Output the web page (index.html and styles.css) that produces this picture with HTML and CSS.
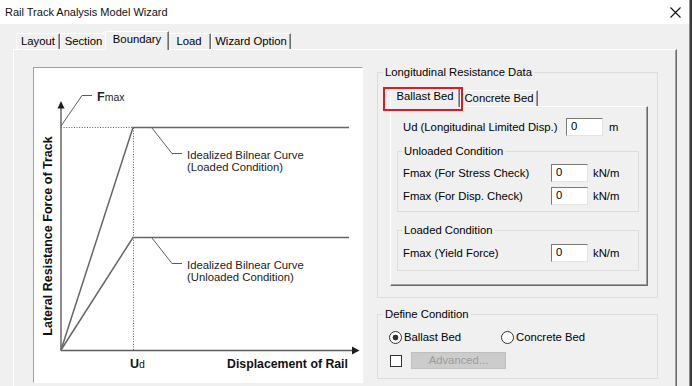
FILE: index.html
```html
<!DOCTYPE html>
<html lang="en">
<head>
    <meta charset="UTF-8">
    <title>Rail Track Analysis Model Wizard</title>
    <link rel="stylesheet" href="styles.css">
</head>
<body>
<div class="window">
    <div class="titlebar">
        <span class="title">Rail Track Analysis Model Wizard</span>
        <svg class="close" width="11" height="11" viewBox="0 0 11 11">
            <path d="M0.5 0.5L10.5 10.5M10.5 0.5L0.5 10.5" stroke="#111" stroke-width="1.1" fill="none"/>
        </svg>
    </div>

    <div class="tabs">
        <div class="tab w-layout">Layout</div>
        <div class="tab w-section">Section</div>
        <div class="tab w-boundary selected">Boundary</div>
        <div class="tab w-load">Load</div>
        <div class="tab w-wizard">Wizard Option</div>
    </div>

    <div class="tabpanel">
        <!-- boundary diagram -->
        <div class="graph">
            <svg width="328" height="314" viewBox="34 68 328 314" font-family="Liberation Sans, Arial, sans-serif">
                <g stroke="#5c5c5c" fill="none">
                    <line x1="61" y1="106" x2="61" y2="350.5" stroke-width="1.4"/>
                    <line x1="61" y1="350.5" x2="354" y2="350.5" stroke-width="1.4"/>
                    <line x1="61" y1="127.5" x2="133" y2="127.5" stroke-dasharray="1 1.6"/>
                    <line x1="133.5" y1="128" x2="133.5" y2="350" stroke-dasharray="1 1.6"/>
                    <polyline points="61,350 133,127.5 349,127.5" stroke="#666" stroke-width="1.5"/>
                    <polyline points="61,350 133,237.5 349,237.5" stroke="#666" stroke-width="1.5"/>
                    <polyline points="61,126 82,95.5 92,95.5"/>
                    <polyline points="152,128 172,153.5 182,153.5"/>
                    <polyline points="152,238 172,263.5 182,263.5"/>
                </g>
                <polygon points="61,101 57.5,108.5 64.5,108.5" fill="#1e1e1e"/>
                <polygon points="359.5,350.5 352,346.5 352,354.5" fill="#1e1e1e"/>

                <text x="97" y="101" fill="#222"><tspan font-size="12.5" font-weight="bold">F</tspan><tspan font-size="10.5">max</tspan></text>
                <text x="187" y="159" font-size="11.3" fill="#222">Idealized Bilnear Curve</text>
                <text x="187" y="171" font-size="11.3" fill="#222">(Loaded Condition)</text>
                <text x="187" y="269" font-size="11.3" fill="#222">Idealized Bilnear Curve</text>
                <text x="187" y="281" font-size="11.3" fill="#222">(Unloaded Condition)</text>
                <text x="130" y="368" fill="#111"><tspan font-size="12.5" font-weight="bold">U</tspan><tspan font-size="10.5">d</tspan></text>
                <text x="227" y="368" font-size="12.3" font-weight="bold" fill="#111">Displacement of Rail</text>
                <text transform="translate(52 236) rotate(-90)" text-anchor="middle" font-size="12.5" font-weight="bold" fill="#111">Lateral Resistance Force of Track</text>
            </svg>
        </div>

        <div class="side">
            <fieldset class="group long">
                <legend>Longitudinal Resistance Data</legend>
                <div class="subtabs">
                    <div class="subtab w-ballast selected">Ballast Bed</div>
                    <div class="subtab w-concrete">Concrete Bed</div>
                </div>
                <div class="subpanel">
                    <div class="row ud">
                        <span class="lbl wide">Ud (Longitudinal Limited Disp.)</span>
                        <div class="input">0</div>
                        <span class="unit">m</span>
                    </div>
                    <fieldset class="group inner unloaded">
                        <legend>Unloaded Condition</legend>
                        <div class="row">
                            <span class="lbl">Fmax (For Stress Check)</span>
                            <div class="input">0</div>
                            <span class="unit">kN/m</span>
                        </div>
                        <div class="row">
                            <span class="lbl">Fmax (For Disp. Check)</span>
                            <div class="input">0</div>
                            <span class="unit">kN/m</span>
                        </div>
                    </fieldset>
                    <fieldset class="group inner loaded">
                        <legend>Loaded Condition</legend>
                        <div class="row">
                            <span class="lbl">Fmax (Yield Force)</span>
                            <div class="input">0</div>
                            <span class="unit">kN/m</span>
                        </div>
                    </fieldset>
                </div>
            </fieldset>

            <fieldset class="group define">
                <legend>Define Condition</legend>
                <div class="radios">
                    <div class="opt first"><span class="radio checked"></span>Ballast Bed</div>
                    <div class="opt"><span class="radio"></span>Concrete Bed</div>
                </div>
                <div class="checkrow">
                    <span class="check"></span>
                    <div class="button disabled">Advanced...</div>
                </div>
            </fieldset>
        </div>
    </div>
</div>
</body>
</html>
```

FILE: styles.css
```css
* {
    box-sizing: border-box;
}

body {
    margin: 0;
    width: 692px;
    height: 386px;
    overflow: hidden;
    background-color: #3c3c3c;
    font-family: "Liberation Sans", Arial, sans-serif;
    font-size: 11.3px;
    color: #000;
}

.window {
    width: 690px;
    height: 386px;
    background-color: #f0f0f0;
    border-right: 1px solid #8c8c8c;
    display: flex;
    flex-direction: column;
}

.titlebar {
    height: 24px;
    flex: none;
    background-color: #fff;
    display: flex;
    align-items: center;
    justify-content: space-between;
    padding: 0 8px 0 5px;
}

.title {
    font-size: 11px;
    color: #111;
}

.close {
    display: block;
}

/* main tab strip */
.tabs {
    display: flex;
    align-items: flex-end;
    height: 18px;
    margin: 7px 0 0 16px;
    flex: none;
}

.tab {
    height: 16px;
    line-height: 14px;
    text-align: center;
    border-top: 1px solid #fff;
    border-left: 1px solid #fff;
    border-right: 1px solid #6f6f6f;
    box-shadow: inset -1px 0 #a0a0a0;
    background-color: #f0f0f0;
}

.tab.selected {
    height: 19px;
    line-height: 15px;
    margin: 0 -2px -1px;
    position: relative;
    z-index: 1;
}

.w-layout { width: 44px; }
.w-section { width: 47px; }
.w-boundary { width: 64px; }
.w-load { width: 44px; }
.w-wizard { width: 80px; }

.tabpanel {
    flex: 1;
    width: 664px;
    margin-left: 13px;
    border-top: 1px solid #fff;
    border-left: 1px solid #fff;
    border-right: 1px solid #696969;
    box-shadow: inset -1px 0 #a0a0a0;
    display: flex;
    align-items: flex-start;
}

.graph {
    margin: 17px 0 0 19px;
    width: 330px;
    height: 316px;
    background-color: #fff;
    border: 1px solid;
    border-color: #a0a0a0 #fff #fff #a0a0a0;
}

.graph svg {
    display: block;
}

.side {
    width: 281px;
    margin: 15px 0 0 14px;
}

/* group boxes */
.group {
    margin: 0;
    padding: 0;
    min-width: 0;
    border: 1px solid #dcdcdc;
}

.group legend {
    padding: 0 2px;
    margin-left: 5px;
    line-height: 14px;
}

.group.inner legend {
    margin-left: 4px;
}

.long {
    padding: 9px 9px 11px 0;
}

.subtabs {
    display: flex;
    align-items: flex-end;
    height: 18px;
    margin-left: 12px;
}

.subtab {
    height: 16px;
    line-height: 14px;
    text-align: center;
    border-top: 1px solid #fff;
    border-left: 1px solid #fff;
    border-right: 1px solid #6f6f6f;
    box-shadow: inset -1px 0 #a0a0a0;
    background-color: #f0f0f0;
}

.subtab.selected {
    height: 19px;
    line-height: 15px;
    margin-bottom: -1px;
    position: relative;
    z-index: 1;
}

/* red highlight drawn over the selected tab */
.subtab.selected::after {
    content: "";
    position: absolute;
    left: -8px;
    top: -2px;
    right: -4px;
    bottom: -4px;
    border: 2px solid #e5161c;
}

.w-ballast { width: 70px; }
.w-concrete { width: 78px; }

.subpanel {
    margin-left: 12px;
    border: 1px solid;
    border-color: #fff #696969 #696969 #fff;
    box-shadow: inset -1px -1px #a0a0a0;
    padding: 11px 0 14px 0;
}

.row {
    display: flex;
    align-items: center;
    height: 18px;
}

.row.ud {
    margin-left: 12px;
}

.inner .row {
    margin-left: 5px;
}

.lbl {
    width: 148px;
}

.lbl.wide {
    width: 163px;
}

.input {
    width: 37px;
    height: 18px;
    padding: 1px 4px;
    line-height: 13px;
    background-color: #fff;
    border: 1px solid;
    border-color: #7a7a7a #e3e3e3 #e3e3e3 #7a7a7a;
}

.unit {
    margin-left: 5px;
}

.ud .unit {
    margin-left: 6px;
}

.inner {
    margin: 0 8px 0 6px;
    display: flex;
    flex-direction: column;
    gap: 5px;
}

.unloaded {
    margin-top: 8px;
    padding: 6px 0 6px 0;
}

.loaded {
    margin-top: 11px;
    padding: 7px 0 8px 0;
}

.define {
    margin-top: 9px;
    padding: 9px 0 9px 0;
}

.radios {
    display: flex;
    height: 14px;
    align-items: center;
    margin-left: 11px;
}

.opt {
    display: flex;
    align-items: center;
    gap: 2px;
}

.opt.first {
    width: 112px;
}

.radio {
    width: 13px;
    height: 13px;
    border: 1px solid #333;
    border-radius: 50%;
    background-color: #fff;
}

.radio.checked {
    background: radial-gradient(circle, #333 0 2.6px, #fff 3.2px);
}

.checkrow {
    display: flex;
    align-items: center;
    height: 17px;
    margin: 8px 0 0 12px;
}

.check {
    width: 12px;
    height: 12px;
    border: 1px solid #333;
    background-color: #fff;
}

.button {
    width: 95px;
    height: 17px;
    margin-left: 9px;
    line-height: 15px;
    text-align: center;
    background-color: #cccccc;
    border: 1px solid #bfbfbf;
}

.button.disabled {
    color: #9c9c9c;
}
```
